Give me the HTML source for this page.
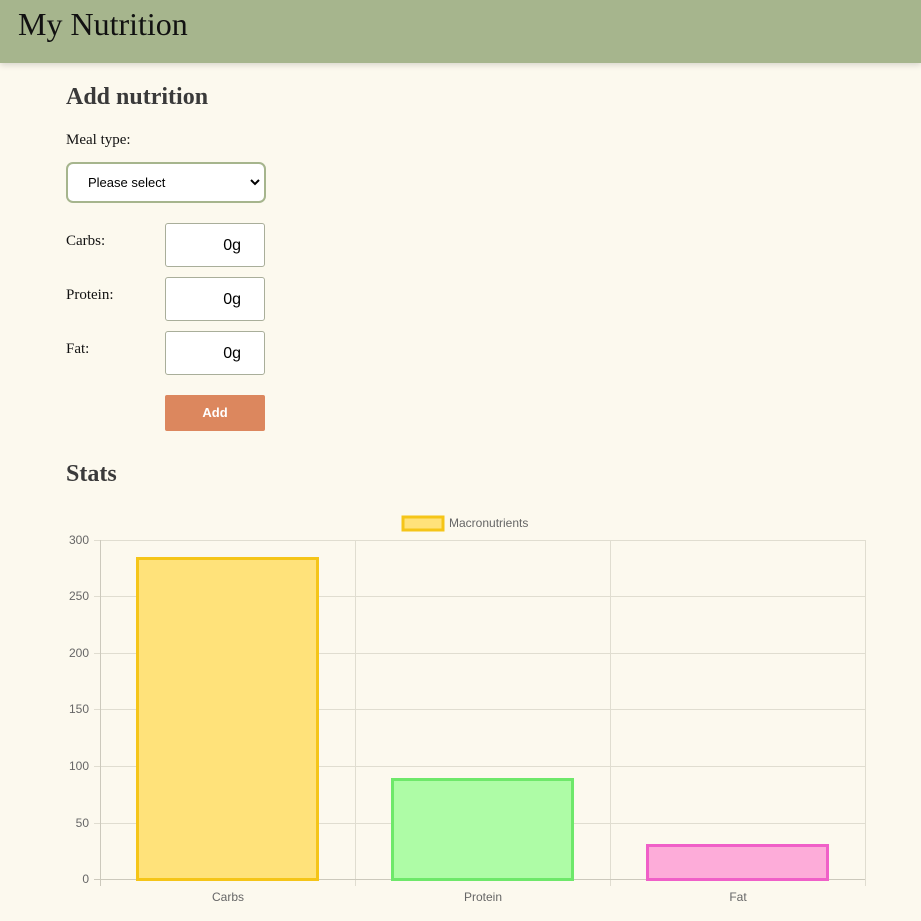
<!DOCTYPE html>
<html><head><style>
body{margin:0;width:921px;height:921px;background:#fcf9ee;font-family:"Liberation Serif",serif;position:relative;overflow:hidden}
.hdr{position:absolute;left:0;top:0;width:921px;height:63px;background:#a6b58d;box-shadow:0 2px 6px rgba(0,0,0,.15)}
.hdr h1{margin:0;position:absolute;left:18px;top:6px;font-weight:normal;font-size:32px;color:#111}
.a{position:absolute}
h2{margin:0;font-size:24px;color:#3a3a3a;font-weight:bold}
.lbl{font-size:15px;color:#111}
.inp{position:absolute;left:165px;width:100px;height:44px;background:#fff;border:1px solid #a9ae9a;border-radius:3px;font-family:"Liberation Sans",sans-serif;font-size:16px;box-sizing:border-box;text-align:right;padding-right:23px;line-height:44px}
</style></head><body>
<div class="hdr"><h1>My Nutrition</h1></div>
<h2 class="a" style="left:66px;top:84px">Add nutrition</h2>
<div class="a lbl" style="left:66px;top:132px">Meal type:</div>
<div class="a" style="left:66px;top:162px;width:200px;height:41px;box-sizing:border-box;border:2px solid #a6b58d;border-radius:7px;background:#fff;font-family:'Liberation Sans',sans-serif;font-size:13px;line-height:37px;padding-left:20px">Please select
<svg style="position:absolute;right:4px;top:14px" width="10" height="8"><path d="M1 2l4 4 4-4" stroke="#000" stroke-width="2" fill="none"/></svg></div>
<div class="a lbl" style="left:66px;top:233px">Carbs:</div>
<div class="inp" style="top:223px">0g</div>
<div class="a lbl" style="left:66px;top:287px">Protein:</div>
<div class="inp" style="top:277px">0g</div>
<div class="a lbl" style="left:66px;top:341px">Fat:</div>
<div class="inp" style="top:331px">0g</div>
<div class="a" style="left:165px;top:395px;width:100px;height:36px;background:#dc875e;border-radius:2px;color:#fff;font-family:'Liberation Sans',sans-serif;font-weight:bold;font-size:13px;text-align:center;line-height:36px">Add</div>
<h2 class="a" style="left:66px;top:461px">Stats</h2>
<svg class="a" style="left:0;top:500px" width="921" height="421" font-family="Liberation Sans, sans-serif" font-size="12" fill="#666">
<rect x="403" y="17" width="40" height="13" fill="#ffe27a" stroke="#f5c518" stroke-width="3"/>
<text x="449" y="27">Macronutrients</text>
<g stroke="#e0ddd0" stroke-width="1">
<line x1="94" y1="40.5" x2="865" y2="40.5"/><line x1="94" y1="96.5" x2="865" y2="96.5"/><line x1="94" y1="153.5" x2="865" y2="153.5"/><line x1="94" y1="209.5" x2="865" y2="209.5"/><line x1="94" y1="266.5" x2="865" y2="266.5"/><line x1="94" y1="323.5" x2="865" y2="323.5"/>
<line x1="355.5" y1="40" x2="355.5" y2="386"/><line x1="610.5" y1="40" x2="610.5" y2="386"/><line x1="865.5" y1="40" x2="865.5" y2="386"/>
</g>
<g stroke="#ccc9bc"><line x1="100.5" y1="40" x2="100.5" y2="386"/><line x1="94" y1="379.5" x2="865" y2="379.5"/></g>
<g text-anchor="end"><text x="89" y="44">300</text><text x="89" y="100">250</text><text x="89" y="157">200</text><text x="89" y="213">150</text><text x="89" y="270">100</text><text x="89" y="327">50</text><text x="89" y="383">0</text></g>
<rect x="137.5" y="58.5" width="180" height="321" fill="#ffe27a" stroke="#f5c518" stroke-width="3"/>
<rect x="392.5" y="279.5" width="180" height="100" fill="#aefca6" stroke="#6ee86a" stroke-width="3"/>
<rect x="647.5" y="345.5" width="180" height="34" fill="#fdacd9" stroke="#f060c8" stroke-width="3"/>
<g text-anchor="middle"><text x="228" y="401">Carbs</text><text x="483" y="401">Protein</text><text x="738" y="401">Fat</text></g>
</svg>
</body></html>
